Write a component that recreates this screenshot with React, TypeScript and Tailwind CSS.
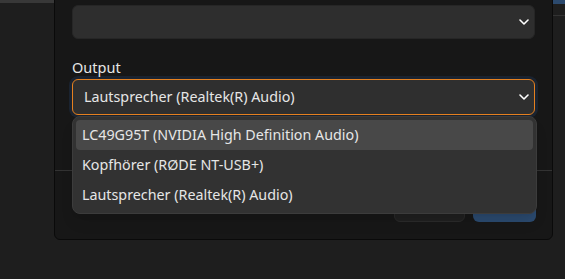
import React from 'react'

function Chevron() {
    return (
        <svg width="10" height="6" viewBox="0 0 10 6" fill="none" className="text-white">
            <path d="M1 1l4 4 4-4" stroke="currentColor" strokeWidth="1.6" strokeLinecap="round" strokeLinejoin="round" />
        </svg>
    )
}

const devices = [
    'LC49G95T (NVIDIA High Definition Audio)',
    'Kopfhörer (RØDE NT-USB+)',
    'Lautsprecher (Realtek(R) Audio)',
]

export default function App() {
    return (
        <div
            className="h-[279px] w-[565px] overflow-hidden bg-[#1e1e1e] flex text-[#e6e6e6]"
            style={{ fontFamily: '"Noto Sans", "Open Sans", sans-serif' }}
        >
            <div className="w-[54px] shrink-0">
                <div className="h-[3px] bg-[#383838]" />
            </div>

            <div className="relative w-[499px] shrink-0 mt-[-40px] h-[280px] bg-[#171717] border border-[#0a0a0a] rounded-md flex flex-col">
                <div className="px-[17px] pt-[44px]">
                    <div className="h-[34px] rounded-md bg-[#2e2e2e] border border-[#262626] flex items-center justify-end pr-[5px]">
                        <Chevron />
                    </div>
                    <p className="mt-[18px] text-[14.5px] leading-5">Output</p>
                    <div className="mt-[2px] h-[36px] rounded-md bg-[#2f2f2f] border border-[#e5801f] ring-[3px] ring-[#1a2330] flex items-center justify-between pl-[11px] pr-[5px] text-[14.3px]">
                        <span>Lautsprecher (Realtek(R) Audio)</span>
                        <Chevron />
                    </div>
                </div>

                <div className="mt-[55px] border-t border-[#333333] px-[16px] pt-[18px] flex justify-end gap-[8px]">
                    <button className="w-[71px] h-[33px] rounded-md bg-[#202020] border border-[#2a2a2a] text-sm">Zurück</button>
                    <button className="w-[63px] h-[33px] rounded-md bg-[#2b4a6f] text-sm">OK</button>
                </div>

                <div className="absolute left-[17px] top-[155px] w-[465px] h-[98px] rounded-lg bg-[#323232] border border-[#3c3c3c] shadow-lg p-[3px] flex flex-col">
                    {devices.map((d, i) => (
                        <div
                            key={d}
                            className={
                                'h-[30px] rounded flex items-center px-[6px] text-[14.3px] ' +
                                (i === 0 ? 'bg-[#484848]' : '')
                            }
                        >
                            {d}
                        </div>
                    ))}
                </div>
            </div>

            <div className="flex-1">
                <div className="h-[4px] bg-[#2c4a6e]" />
                <div className="mt-[11px] h-px bg-[#333333]" />
            </div>
        </div>
    )
}
